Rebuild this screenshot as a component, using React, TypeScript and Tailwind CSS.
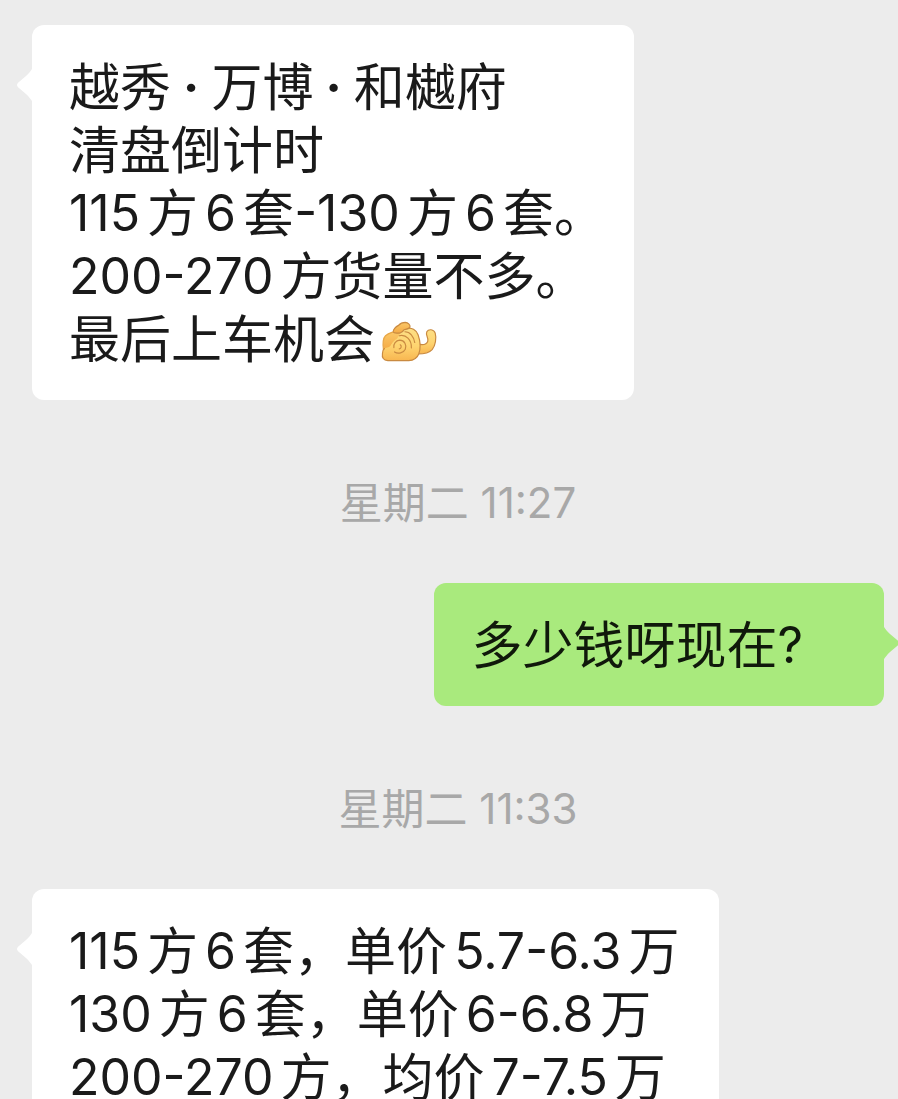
import React from "react";

type Side = "in" | "out";

const LATIN = /([\x20-\x7e·]+)/;

/** Splits a line into Chinese and Latin runs, with a small gap where digits meet characters. */
function Runs({ text, latin }: { text: string; latin: string }) {
  const parts = text.split(LATIN).filter(Boolean);
  return (
    <>
      {parts.map((part, i) => {
        if (!LATIN.test(part))
          return (
            <span key={i} className="align-[-1px]">
              {part}
            </span>
          );
        const before = i > 0 && /^\d/.test(part) ? "pl-[7px]" : "";
        const after = i < parts.length - 1 && /\d$/.test(part) ? "pr-[7px]" : "";
        const weight = part.includes("·") ? "font-bold" : "";
        return (
          <span key={i} className={`${latin} ${before} ${after} ${weight}`}>
            {part}
          </span>
        );
      })}
    </>
  );
}

function Tail({ side }: { side: Side }) {
  return side === "in" ? (
    <svg aria-hidden="true" viewBox="0 0 17 36" className="absolute top-[42px] right-full -mr-px h-9 w-[17px] text-white">
      <path d="M17 0v36C15 32 13 30 10 27L1.800 20Q0 18 1.800 16L10 9C13 6 15 4 17 0Z" fill="currentColor" />
    </svg>
  ) : (
    <svg aria-hidden="true" viewBox="0 0 17 36" className="absolute top-[42px] left-full -ml-px h-9 w-[17px] text-[#a9ea7d]">
      <path d="M0 0v36C2 32 4 30 7 27L15.200 20Q17 18 15.200 16L7 9C4 6 2 4 0 0Z" fill="currentColor" />
    </svg>
  );
}

function Fist() {
  return (
    <svg role="img" aria-label="抱拳" viewBox="40 34 166 122" className="ml-[6px] inline-block h-[41px] w-14 align-[-5px]">
      <defs>
        <linearGradient id="skin" x1="0" y1="0" x2="0" y2="1">
          <stop offset="0" stopColor="#fddf85" />
          <stop offset="0.55" stopColor="#fed470" />
          <stop offset="1" stopColor="#f8b650" />
        </linearGradient>
        <linearGradient id="back" x1="0" y1="0" x2="0" y2="1">
          <stop offset="0" stopColor="#fbc868" />
          <stop offset="1" stopColor="#f4aa45" />
        </linearGradient>
      </defs>
      <g stroke="#c98a41" strokeWidth="3.500" strokeLinecap="round" strokeLinejoin="round">
        <path d="M150 103C164 106 176 104 179 94C182 84 171 76 176 66C181 57 197 58 201 70C205 84 202 107 192 119C182 130 165 132 149 132Z" fill="url(#skin)" />
        <path d="M47 120C44 98 47 84 53 78C60 71 68 69 77 66L100 72L80 120Z" fill="url(#back)" stroke="#e8a748" />
        <path d="M50 116C58 112 66 114 70 104C76 94 80 91 88 86C92 76 101 64 116 57C130 52 145 61 150 75C156 92 158 116 152 132C147 145 137 151 122 152L60 152C47 151 42 143 44 131C44 124 46 119 50 116Z" fill="url(#skin)" stroke="none" />
        <path d="M116 57C130 52 145 61 150 75C156 92 158 116 152 132C147 145 137 151 122 152L60 152C47 151 42 143 44 131C44 124 46 119 50 116" fill="none" />
        <path d="M76 67C75 60 83 51 92 47C96 42 104 38 112 38C120 39 127 45 126 52C124 58 116 58 108 60C104 67 96 71 86 70C80 70 77 69 76 67Z" fill="url(#back)" />
        <path d="M78 113C76 102 84 92 95 91C110 91 117 106 112 118C107 129 90 133 80 126M97 105C102 108 100 116 94 117M94 78C114 73 131 90 130 114M111 66C126 66 137 80 140 98" fill="none" />
      </g>
    </svg>
  );
}

function Bubble({ side, pad, children }: { side: Side; pad: string; children: React.ReactNode }) {
  const look = side === "in" ? "self-start bg-white text-[#1a1a1a]" : "self-end bg-[#a9ea7d] text-[#10190b]";
  return (
    <article className={`relative rounded-xl py-[30px] pl-[37px] text-[51px] leading-[63px] ${pad} ${look}`}>
      <Tail side={side} />
      {children}
    </article>
  );
}

function Line({ text, children }: { text: string; children?: React.ReactNode }) {
  return (
    <p className="h-[63px] whitespace-pre">
      <Runs text={text} latin="text-[50px]" />
      {children}
    </p>
  );
}

function Stamp({ time }: { time: string }) {
  return (
    <time className="block h-[183px] pt-[72px] text-center text-[43px] leading-[60px] whitespace-pre text-[#a8a8a8]">
      <Runs text={time} latin="text-[42px]" />
    </time>
  );
}

export default function App() {
  return (
    <main className="flex h-screen flex-col overflow-hidden bg-[#ececec] pt-[25px] pr-[14px] pl-8 font-['Inter','Noto_Sans_CJK_SC',sans-serif] *:shrink-0">
      <Bubble side="in" pad="pr-[29px]">
        <Line text="越秀 · 万博 · 和樾府" />
        <Line text="清盘倒计时" />
        <Line text="115方6套-130方6套。" />
        <Line text="200-270方货量不多。" />
        <Line text="最后上车机会">
          <Fist />
        </Line>
      </Bubble>
      <Stamp time="星期二 11:27" />
      <Bubble side="out" pad="pr-[81px]">
        <Line text="多少钱呀现在?" />
      </Bubble>
      <Stamp time="星期二 11:33" />
      <Bubble side="in" pad="pr-[40px]">
        <Line text="115方6套，单价5.7-6.3万" />
        <Line text="130方6套，单价6-6.8万" />
        <Line text="200-270方，均价7-7.5万" />
      </Bubble>
    </main>
  );
}
